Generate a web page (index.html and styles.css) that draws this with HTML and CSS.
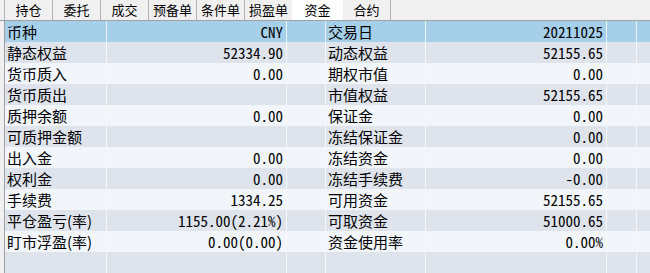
FILE: index.html
```html
<!DOCTYPE html>
<html lang="zh-CN">
<head>
<meta charset="utf-8">
<title>资金</title>
<link rel="stylesheet" href="styles.css">
</head>
<body>
<div class="app">
  <div class="tabs">
    <div class="tab">持仓</div>
    <div class="tab">委托</div>
    <div class="tab">成交</div>
    <div class="tab">预备单</div>
    <div class="tab">条件单</div>
    <div class="tab">损盈单</div>
    <div class="tab active">资金</div>
    <div class="tab">合约</div>
  </div>
  <div class="grid">
    <div class="row head"><div class="c lbl">币种</div><div class="c num">CNY</div><div class="c"></div><div class="c lbl">交易日</div><div class="c num">20211025</div><div class="c"></div><div class="c last"></div></div>
    <div class="row dark"><div class="c lbl">静态权益</div><div class="c num">52334.90</div><div class="c"></div><div class="c lbl">动态权益</div><div class="c num">52155.65</div><div class="c"></div><div class="c last"></div></div>
    <div class="row light"><div class="c lbl">货币质入</div><div class="c num">0.00</div><div class="c"></div><div class="c lbl">期权市值</div><div class="c num">0.00</div><div class="c"></div><div class="c last"></div></div>
    <div class="row dark"><div class="c lbl">货币质出</div><div class="c num"></div><div class="c"></div><div class="c lbl">市值权益</div><div class="c num">52155.65</div><div class="c"></div><div class="c last"></div></div>
    <div class="row light"><div class="c lbl">质押余额</div><div class="c num">0.00</div><div class="c"></div><div class="c lbl">保证金</div><div class="c num">0.00</div><div class="c"></div><div class="c last"></div></div>
    <div class="row dark"><div class="c lbl">可质押金额</div><div class="c num"></div><div class="c"></div><div class="c lbl">冻结保证金</div><div class="c num">0.00</div><div class="c"></div><div class="c last"></div></div>
    <div class="row light"><div class="c lbl">出入金</div><div class="c num">0.00</div><div class="c"></div><div class="c lbl">冻结资金</div><div class="c num">0.00</div><div class="c"></div><div class="c last"></div></div>
    <div class="row dark"><div class="c lbl">权利金</div><div class="c num">0.00</div><div class="c"></div><div class="c lbl">冻结手续费</div><div class="c num">-0.00</div><div class="c"></div><div class="c last"></div></div>
    <div class="row light"><div class="c lbl">手续费</div><div class="c num">1334.25</div><div class="c"></div><div class="c lbl">可用资金</div><div class="c num">52155.65</div><div class="c"></div><div class="c last"></div></div>
    <div class="row dark"><div class="c lbl">平仓盈亏(率)</div><div class="c num">1155.00(2.21%)</div><div class="c"></div><div class="c lbl">可取资金</div><div class="c num">51000.65</div><div class="c"></div><div class="c last"></div></div>
    <div class="row light"><div class="c lbl">盯市浮盈(率)</div><div class="c num">0.00(0.00)</div><div class="c"></div><div class="c lbl">资金使用率</div><div class="c num">0.00%</div><div class="c"></div><div class="c last"></div></div>
    <div class="row dark"><div class="c"></div><div class="c"></div><div class="c"></div><div class="c"></div><div class="c"></div><div class="c"></div><div class="c last"></div></div>
  </div>
</div>
</body>
</html>
```
FILE: styles.css
```css
html, body {
  margin: 0;
  padding: 0;
  background: #f0f0f0;
}
body {
  font-family: "Noto Sans CJK SC", "Noto Sans", sans-serif;
  color: #000;
  overflow: hidden;
}
.app {
  width: 650px;
  height: 273px;
  display: flex;
  flex-direction: column;
}
.tabs {
  display: flex;
  height: 20px;
  padding-left: 4px;
  border-bottom: 1px solid #a0a0a0;
  background: #f0f0f0;
}
.tab {
  width: 47px;
  border-left: 1px solid #b4b4b4;
  font-size: 13px;
  line-height: 20px;
  text-align: center;
}
.tab:last-child {
  border-right: 1px solid #b4b4b4;
}
.tab.active {
  background: #ffffff;
  border-left: 1px solid #ffffff;
  width: 49px;
}
.tab.active + .tab {
  border-left-color: #ffffff;
}
.grid {
  margin-left: 4px;
  border-left: 1px solid #a0a0a0;
  flex: 1;
}
.row {
  display: grid;
  grid-template-columns: 102px 180px 39px 100px 181px 30px 1fr;
  height: 21px;
}
.row.head { background: #a6cfea; }
.row.dark { background: #dfe4ec; }
.row.light { background: #f2f6fb; }
.c {
  border-right: 1px solid #f4f8fc;
  font-size: 15px;
  line-height: 21px;
  white-space: nowrap;
  overflow: hidden;
}
.row.head .c { border-right-color: #eaf3fa; }
.c.last { border-right: 0; }
.lbl {
  padding-left: 2px;
}
.num {
  text-align: right;
  padding-right: 3px;
  font-family: "Noto Sans Mono CJK SC", "DejaVu Sans Mono", monospace;
  font-size: 15px;
}
```
